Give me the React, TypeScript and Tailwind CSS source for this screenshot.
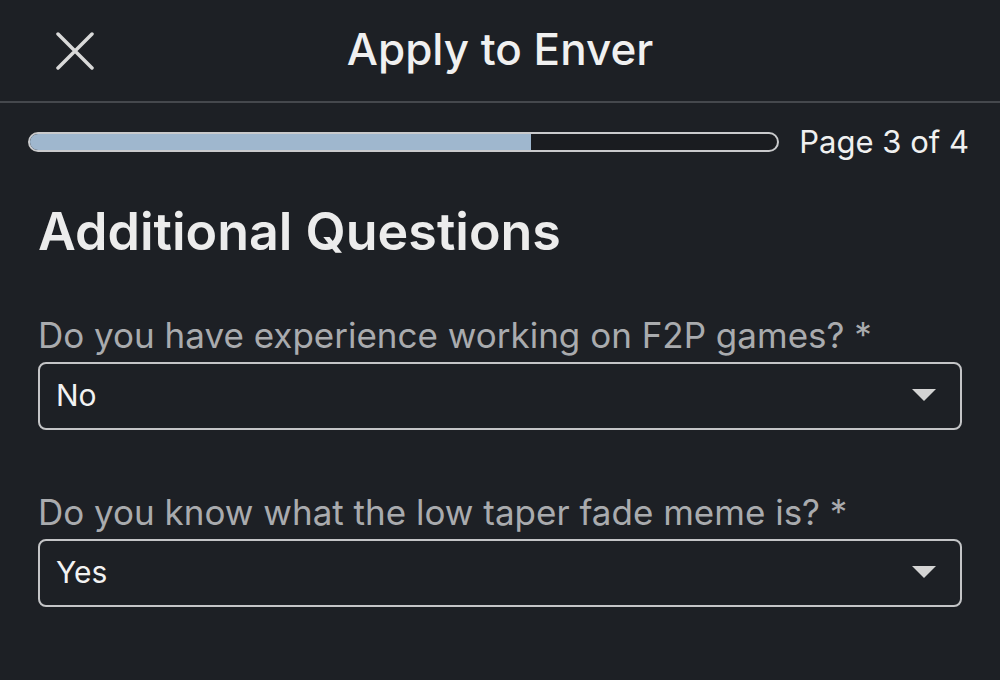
import React from "react";

function Caret() {
  return (
    <svg width="24" height="13" viewBox="0 0 24 13" className="shrink-0">
      <path d="M0 0 L24 0 L12 12 Z" fill="#d4d4d4" />
    </svg>
  );
}

function Field({ label, value }: { label: string; value: string }) {
  return (
    <div className="flex flex-col">
      <div className="text-[35px] leading-[40px] text-[#a9abae] mb-[7px]">{label}</div>
      <div className="h-[68px] border-2 border-[#c4c5c7] rounded-[8px] flex items-center justify-between pl-[16px] pr-[24px]">
        <span className="text-[30px] text-[#f2f2f2]">{value}</span>
        <Caret />
      </div>
    </div>
  );
}

export default function App() {
  return (
    <div
      className="w-[1000px] h-[680px] bg-[#1d2025] text-[#ededed] overflow-hidden"
      style={{ fontFamily: "Inter, 'Liberation Sans', sans-serif" }}
    >
      <div className="relative h-[103px] flex items-center justify-center border-b-2 border-[#45484d]">
        <svg className="absolute left-[56px] top-[32px]" width="38" height="38" viewBox="0 0 38 38">
          <path d="M2 2 L36 36 M36 2 L2 36" stroke="#d9d9d9" strokeWidth="3.5" strokeLinecap="round" />
        </svg>
        <h1 className="text-[44px] font-medium text-[#f0f0f0] -mt-[4px]">Apply to Enver</h1>
      </div>
      <div className="px-[28px] mt-[16px] flex items-center gap-[20px]">
        <div className="flex-1 h-[20px] rounded-full border-2 border-[#c9cacc] overflow-hidden bg-[#1a1c20]">
          <div className="h-full w-[67%] bg-[#9fb7ce]" />
        </div>
        <div className="text-[31px] text-[#f0f0f0] pr-[3px]">Page 3 of 4</div>
      </div>
      <div className="px-[38px]">
        <h2 className="mt-[34px] text-[52px] font-semibold text-[#ececec] leading-[64px]">Additional Questions</h2>
        <div className="mt-[51px] flex flex-col gap-[62px]">
          <Field label="Do you have experience working on F2P games? *" value="No" />
          <Field label="Do you know what the low taper fade meme is? *" value="Yes" />
        </div>
      </div>
    </div>
  );
}
